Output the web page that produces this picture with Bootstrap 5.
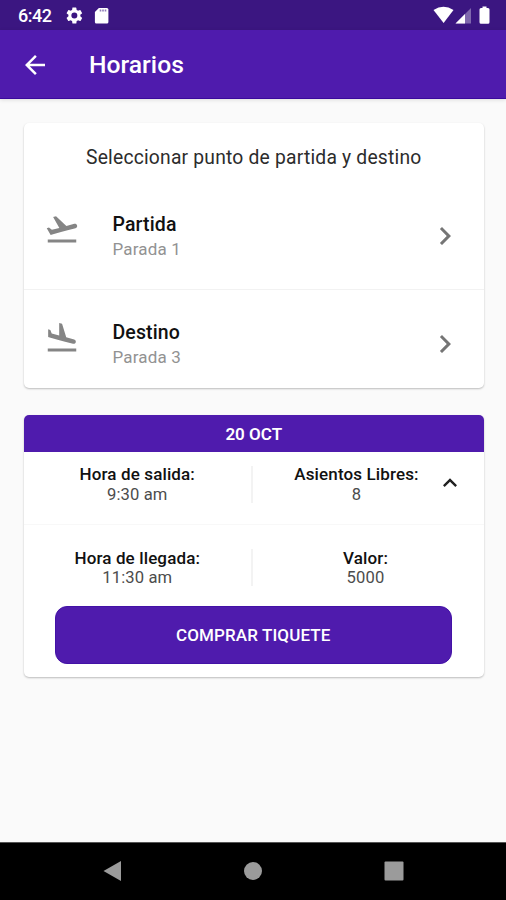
<!DOCTYPE html>
<html lang="es">
<head>
<meta charset="utf-8">
<meta name="viewport" content="width=device-width, initial-scale=1">
<title>Horarios</title>
<link href="https://cdn.jsdelivr.net/npm/bootstrap@5.3.0/dist/css/bootstrap.min.css" rel="stylesheet">
<style>
:root{--brand:#4f1bad;--brand-dark:#3b1681}
body{font-family:Roboto,"Liberation Sans",sans-serif;background:#fafafa;color:#111;height:900px;overflow:hidden;line-height:20px}
svg{display:block;flex:none}
.fw-md{font-weight:500}
.status-bar{height:30px;background:var(--brand-dark);padding:2px 15.5px 0 18px;font-size:18px;letter-spacing:-.45px}
.status-icon{margin-top:-2px}
.app-bar{height:69px;background:var(--brand);padding:1px 20px 0;border-bottom:1px solid #3a0a9c;box-shadow:0 1px 4px rgba(0,0,0,.12)}
.app-title{font-size:24.7px;line-height:30px;margin-left:39px;padding-top:1px}
main{padding:24px 22.5px 0 24px}
.panel{background:#fff;border-radius:5px;box-shadow:0 1px 2px rgba(0,0,0,.25);overflow:hidden}
.trip-card{height:264.5px;margin-bottom:27.5px}
.trip-heading{font-size:19.3px;padding-top:25px;height:58px;letter-spacing:.2px;color:#2c2c2c}
.stop-row{padding:0 20px}
.stop-first{height:109px;border-bottom:1px solid #f2f2f2}
.stop-last{height:97.5px}
.stop-text{margin-left:32.5px;padding-top:32px}
.stop-last .stop-text{padding-top:31px}
.stop-name{font-size:19.5px;line-height:24px;letter-spacing:.13px}
.stop-place{font-size:17px;line-height:20px;margin-top:2px;color:#929292;letter-spacing:.15px}
.stop-icon{margin-top:30px}
.stop-last .stop-icon{margin-top:29.5px}
.stop-chevron{margin:36.5px .5px 0 auto}
.stop-last .stop-chevron{margin-top:35.5px}
.date-head{height:36.5px;background:var(--brand);font-size:17px;font-weight:600;padding-top:1px}
.info-row{font-size:17px;line-height:19.6px;letter-spacing:.13px}
.info-main{height:73.5px;padding-top:13.5px;border-bottom:1px solid #f8f8f8}
.info-more{height:80.5px;padding-top:23.5px}
.info-value{color:#4c4c4c;font-size:16.6px}
.info-left{width:226.5px}
.rule{width:2.5px;height:37px;background:#f3f3f3;margin-top:1px}
.info-more .rule{margin-top:0}
.info-mid{width:207px}
.info-right{width:225px}
.toggle-icon{margin:4px 0 0 -24px}
.buy{--bs-btn-bg:var(--brand);--bs-btn-color:#fff;--bs-btn-border-color:#4312a6;--bs-btn-hover-bg:var(--brand-dark);--bs-btn-hover-color:#fff;--bs-btn-border-radius:12px;width:397.5px;height:58.5px;margin-left:30.5px;font-size:17px;font-weight:500;letter-spacing:.12px;padding-top:7px;margin-bottom:13px}
.sys-nav{height:58px;background:#000;padding:0 102px 2px;border-top:1px solid #555}
</style>
</head>
<body class="d-flex flex-column">
<div class="status-bar d-flex align-items-center text-white fw-md">
  <span>6:42</span>
  <svg class="status-icon ms-2 me-auto" width="50" height="30" viewBox="0 0 50 30" fill="#fff">
    <path transform="translate(4.4 5.6) scale(.83)" d="M19.140 12.940c.04-.3.06-.61.06-.94s-.02-.64-.07-.94l2.030-1.580a.49.49 0 0 0 .12-.61l-1.920-3.320a.49.49 0 0 0-.59-.22l-2.390.96c-.5-.38-1.030-.7-1.620-.94L14.400 2.810A.48.48 0 0 0 13.920 2.400h-3.840c-.24 0-.43.17-.47.41l-.36 2.540c-.59.24-1.130.57-1.620.94l-2.390-.96a.48.48 0 0 0-.59.22L2.740 8.870a.47.47 0 0 0 .12.61l2.030 1.580a6 6 0 0 0 0 1.880l-2.030 1.580a.49.49 0 0 0-.12.61l1.920 3.320c.12.22.37.29.59.22l2.390-.96c.5.38 1.030.7 1.620.94l.36 2.540c.05.24.24.41.48.41h3.840c.24 0 .44-.17.47-.41l.36-2.540c.59-.24 1.130-.56 1.620-.94l2.390.96c.22.08.47 0 .59-.22l1.920-3.320a.47.47 0 0 0-.12-.61zM12 15.600a3.600 3.600 0 1 1 0-7.200 3.600 3.600 0 0 1 0 7.200z"/>
    <path d="M38.900 8H46.900q1.500 0 1.500 1.500V22q0 1.500-1.500 1.500H36.400Q34.900 23.500 34.900 22V12z"/>
    <path d="M39.700 9.500h1.600v2h-1.600zM42.200 9.500h1.600v2h-1.600zM44.700 9.500h1.600v2h-1.600z" fill="#8f7cb8"/>
  </svg>
  <svg class="status-icon" width="58" height="30" viewBox="0 0 58 30" fill="#fff">
    <path d="M.500 10Q10.500 3.500 20.500 10L10.600 23z"/>
    <path d="M22.500 23.500L38 8V23.500z" opacity=".35"/>
    <path d="M22.500 23.500L32 14V23.500z"/>
    <path d="M49.500 6.500h4V8h1.500q1.500 0 1.500 1.500V22.300q0 1.500-1.500 1.500H48q-1.500 0-1.500-1.500V9.500Q46.500 8 48 8H49.500z"/>
  </svg>
</div>
<header class="app-bar d-flex align-items-center text-white">
  <svg width="30" height="30" viewBox="0 0 24 24" fill="#fff"><path d="M20 11H7.830l5.590-5.590L12 4l-8 8 8 8 1.410-1.410L7.830 13H20z"/></svg>
  <h1 class="app-title fw-md mb-0">Horarios</h1>
</header>
<main class="flex-grow-1">
  <section class="panel trip-card">
    <div class="trip-heading text-center">Seleccionar punto de partida y destino</div>
    <div class="stop-row stop-first d-flex align-items-start">
      <svg class="stop-icon" width="36" height="36" viewBox="0 0 24 24" fill="#858585"><path d="M2.500 19h19v2h-19zm19.570-9.360c-.21-.8-1.040-1.280-1.840-1.060L14.920 10l-6.900-6.430-1.930.51 4.140 7.170-4.970 1.330-1.970-1.540-1.450.39 1.820 3.160.77 1.330 1.600-.43 5.310-1.420 4.350-1.160L21 11.490c.81-.23 1.280-1.050 1.070-1.850z"/></svg>
      <div class="stop-text"><div class="stop-name fw-md">Partida</div><div class="stop-place">Parada 1</div></div>
      <svg class="stop-chevron" width="36" height="36" viewBox="0 0 24 24" fill="#757575"><path d="M10 6L8.590 7.410 13.170 12l-4.580 4.590L10 18l6-6z"/></svg>
    </div>
    <div class="stop-row stop-last d-flex align-items-start">
      <svg class="stop-icon" width="36" height="36" viewBox="0 0 24 24" fill="#858585"><path d="M2.500 19h19v2h-19zm7.180-5.730l4.350 1.160 5.310 1.420c.8.21 1.620-.26 1.840-1.060.21-.8-.26-1.620-1.060-1.840l-5.310-1.420-2.760-9.020L10.120 2v8.280L5.150 8.950l-.93-2.320-1.450-.39v5.170l1.600.43 5.310 1.430z"/></svg>
      <div class="stop-text"><div class="stop-name fw-md">Destino</div><div class="stop-place">Parada 3</div></div>
      <svg class="stop-chevron" width="36" height="36" viewBox="0 0 24 24" fill="#757575"><path d="M10 6L8.590 7.410 13.170 12l-4.580 4.590L10 18l6-6z"/></svg>
    </div>
  </section>
  <section class="panel">
    <div class="date-head d-flex align-items-center justify-content-center text-white">20 OCT</div>
    <div class="info-row info-main d-flex text-center">
      <div class="info-left"><div class="fw-md">Hora de salida:</div><div class="info-value">9:30 am</div></div>
      <div class="rule"></div>
      <div class="info-mid"><div class="fw-md">Asientos Libres:</div><div class="info-value">8</div></div>
      <svg class="toggle-icon" width="28" height="28" viewBox="0 0 24 24" fill="#222"><path d="M12 8l-6 6 1.410 1.410L12 10.830l4.590 4.580L18 14z"/></svg>
    </div>
    <div class="info-row info-more d-flex text-center">
      <div class="info-left"><div class="fw-md">Hora de llegada:</div><div class="info-value">11:30 am</div></div>
      <div class="rule"></div>
      <div class="info-right"><div class="fw-md">Valor:</div><div class="info-value">5000</div></div>
    </div>
    <button type="button" class="btn buy d-block">COMPRAR TIQUETE</button>
  </section>
</main>
<footer class="sys-nav d-flex align-items-center justify-content-between">
  <svg width="20" height="22" viewBox="0 0 20 22" fill="#9b9b9b"><path d="M1.500 11L19 1v20z"/></svg>
  <svg width="20" height="20" viewBox="0 0 20 20" fill="#9b9b9b"><circle cx="10" cy="10" r="9"/></svg>
  <svg width="20" height="20" viewBox="0 0 20 20" fill="#9b9b9b"><rect x=".5" y=".5" width="19" height="19" rx="1"/></svg>
</footer>
<script src="https://cdn.jsdelivr.net/npm/bootstrap@5.3.0/dist/js/bootstrap.bundle.min.js"></script>
</body>
</html>
